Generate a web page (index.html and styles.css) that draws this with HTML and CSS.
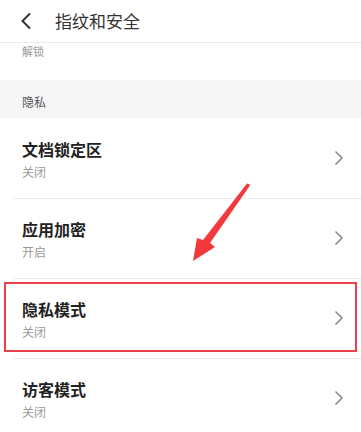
FILE: index.html
```html
<!DOCTYPE html>
<html lang="zh">
<head>
<meta charset="utf-8">
<link rel="stylesheet" href="styles.css">
</head>
<body>
<div class="screen">
  <header class="topbar">
    <svg class="back" width="12" height="18" viewBox="0 0 12 18"><path d="M10 1.5 L2.5 9 L10 16.5" fill="none" stroke="#333" stroke-width="2"/></svg>
    <span class="title">指纹和安全</span>
  </header>
  <div class="prev-tail"><span>解锁</span></div>
  <div class="section">隐私</div>
  <div class="list">
    <div class="row">
      <div class="texts"><div class="name">文档锁定区</div><div class="sub">关闭</div></div>
      <svg class="chev" width="10" height="16" viewBox="0 0 10 16"><path d="M1.5 1.5 L8 8 L1.5 14.5" fill="none" stroke="#8a8a8a" stroke-width="1.6"/></svg>
    </div>
    <div class="row">
      <div class="texts"><div class="name">应用加密</div><div class="sub">开启</div></div>
      <svg class="chev" width="10" height="16" viewBox="0 0 10 16"><path d="M1.5 1.5 L8 8 L1.5 14.5" fill="none" stroke="#8a8a8a" stroke-width="1.6"/></svg>
    </div>
    <div class="row highlighted">
      <div class="texts"><div class="name">隐私模式</div><div class="sub">关闭</div></div>
      <svg class="chev" width="10" height="16" viewBox="0 0 10 16"><path d="M1.5 1.5 L8 8 L1.5 14.5" fill="none" stroke="#8a8a8a" stroke-width="1.6"/></svg>
      <div class="redbox"></div>
    </div>
    <div class="row">
      <div class="texts"><div class="name">访客模式</div><div class="sub">关闭</div></div>
      <svg class="chev" width="10" height="16" viewBox="0 0 10 16"><path d="M1.5 1.5 L8 8 L1.5 14.5" fill="none" stroke="#8a8a8a" stroke-width="1.6"/></svg>
    </div>
  </div>
  <svg class="arrow" width="72" height="82" viewBox="0 0 72 82">
    <polygon points="68,1 69,2.5 29,60 34,64 12,78 16,55 22,57 66,0.5" fill="#f23a3c"/>
  </svg>
</div>
</body>
</html>
```

FILE: styles.css
```css
* { box-sizing: border-box; }
html, body { margin: 0; padding: 0; background: #fff; }
body { font-family: "Noto Sans CJK SC", "Noto Sans", sans-serif; }
.screen { position: relative; width: 361px; height: 432px; overflow: hidden; background: #fff; }
.topbar {
  height: 43px;
  display: flex;
  align-items: center;
  border-bottom: 1px solid #ececec;
  padding-left: 20px;
}
.back { margin-right: 23px; }
.title { font-size: 17px; color: #333; line-height: 20px; }
.prev-tail { height: 36px; padding-left: 22px; }
.prev-tail span { display: block; font-size: 11px; line-height: 14px; color: #999; margin-top: 1px; }
.section {
  height: 38px;
  background: #f5f5f5;
  padding-left: 22px;
  font-size: 12px;
  color: #555;
  display: flex;
  align-items: center;
  padding-top: 4px;
}
.list { display: flex; flex-direction: column; }
.row {
  position: relative;
  height: 80px;
  display: flex;
  align-items: center;
  padding: 0 17px 0 22px;
}
.row + .row::before {
  content: "";
  position: absolute;
  left: 13px;
  right: 0;
  top: 0;
  height: 1px;
  background: #ececec;
}
.texts { flex: 1; display: flex; flex-direction: column; gap: 3px; margin-top: 2px; }
.name { font-size: 16px; font-weight: 700; color: #222; line-height: 22px; }
.sub { font-size: 12px; color: #999; line-height: 17px; }
.chev { flex: none; }
.redbox {
  position: absolute;
  left: 4px;
  right: 4px;
  top: 4px;
  bottom: 6px;
  border: 2px solid #e8414a;
}
.arrow { position: absolute; left: 181px; top: 183px; }
```
